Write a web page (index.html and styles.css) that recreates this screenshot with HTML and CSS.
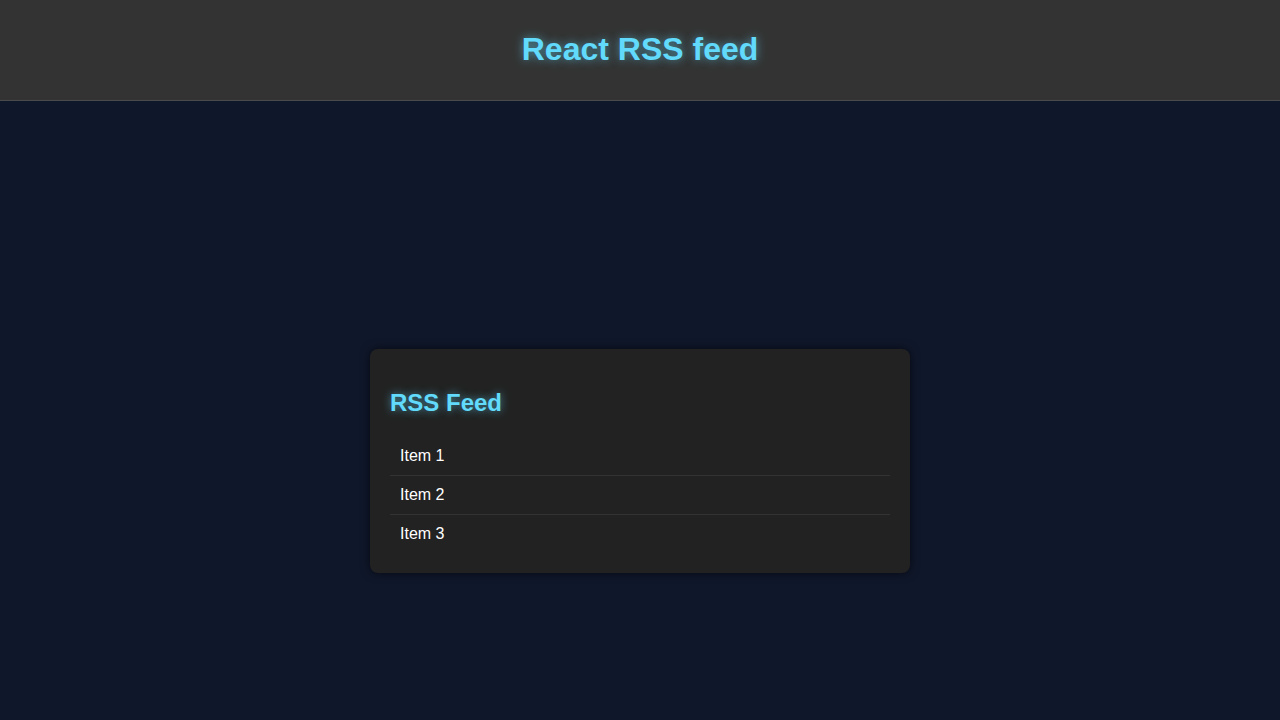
FILE: index.html
```html
<!DOCTYPE html>
<html>
<head>
    <meta charset="UTF-8" />
    <meta name="viewport" content="width=device-width, initial-scale=1.0">
    <link rel="stylesheet" href="styles.css">
</head>
<body>

    <header class="app-header">
        <h1>React RSS feed</h1>
    </header>

    <main class="app-main">
        <section class="feed">
            <h2>RSS Feed</h2>
            <ul class="feed-list">
                <li>Item 1</li>
                <li>Item 2</li>
                <li>Item 3</li>
            </ul>
        </section>
    </main>

</body>
</html>
```

FILE: styles.css
```css
* {
    box-sizing: border-box;
}

body {
    margin: 0;
    background: #0f172a;
    color: #fff;
    font-family: "Liberation Sans", Arial, sans-serif;
}

.app-header {
    background: #333;
    padding: 10px;
    text-align: center;
    border-bottom: 1px solid #4a4a4a;
}

.app-header h1 {
    font-size: 32px;
    margin: 21px 0 22px;
    color: #61dafb;
    text-shadow: 0 0 10px rgba(97, 218, 251, 0.6);
}

.app-main {
    min-height: 100vh;
    display: flex;
    align-items: center;
    justify-content: center;
}

.feed {
    width: 540px;
    background: #222;
    border-radius: 8px;
    padding: 20px;
    box-shadow: 0 0 10px rgba(0, 0, 0, 0.6);
}

.feed h2 {
    font-size: 24px;
    margin: 20px 0;
    color: #61dafb;
    text-shadow: 0 0 8px rgba(97, 218, 251, 0.6);
}

.feed-list {
    list-style: none;
    margin: 0;
    padding: 0;
}

.feed-list li {
    padding: 10px;
    font-size: 16px;
    border-bottom: 1px solid #333;
}

.feed-list li:last-child {
    border-bottom: none;
}
```
